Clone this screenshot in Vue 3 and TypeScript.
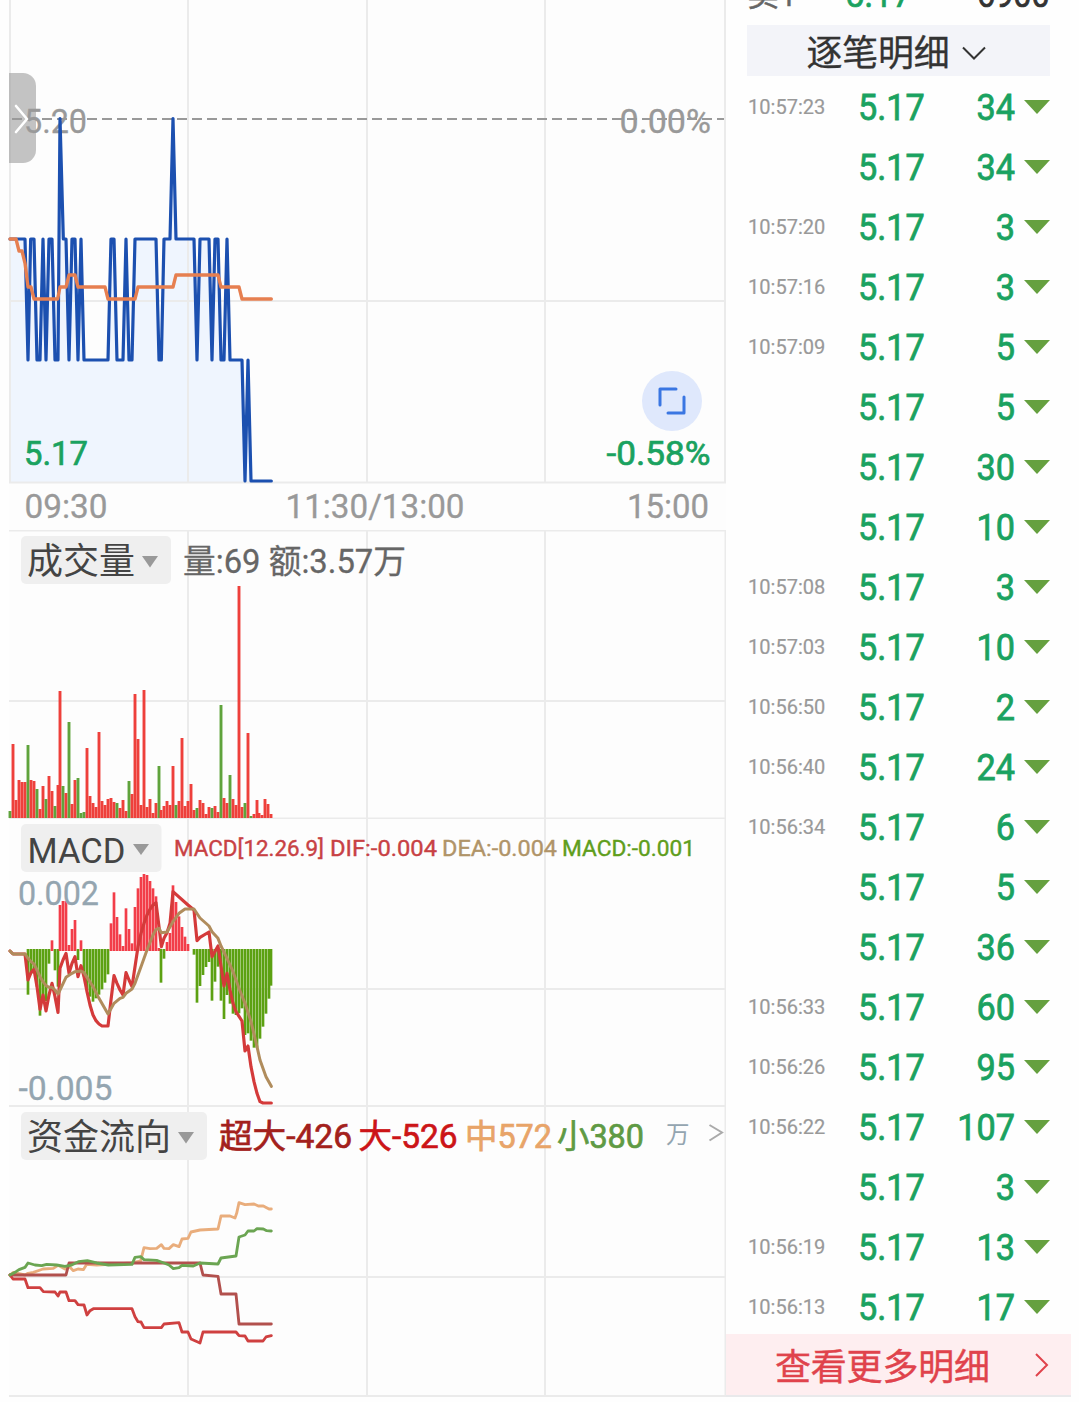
<script setup lang="ts">
interface Label {
  text: string
  x: number
  y: number
  width: number
  size: number
  color: string
  bold?: number
}

interface Tick {
  time: string
  price: string
  qty: number
}

type Point = [number, number]

// Chart data is kept on a grid three times finer than the screen pixel.
const STEP = 8.91
const START = 30
const barX = (i: number): number => Math.round((START + i * STEP) / 3)

const poly = (s: string): string => s.trim().split(/\s+/).join(' ')

// Price runs: "x @ level" pairs, level in cents above 5.00
const priceRuns =
  '30@19 75@19 84@18 92@19 102@19 111@18 120@18 129@19 138@18 147@19 156@19 165@18 174@18 180@20 190@19 198@19 207@18 216@19 225@19 234@18 243@19 252@18 324@18 333@19 342@19 351@18 369@18 378@19 387@18 396@18 405@19 468@19 477@18 484@18 492@19 510@19 519@20 528@19 582@19 591@18 600@19 627@19 636@18 645@19 654@19 663@18 672@18 681@19 690@18 726@18 735@17 744@18 753@17 814@17'
const levelY: Record<string, number> = { '20': 118.5, '19': 239, '18': 360, '17': 481 }
const pricePoints: Point[] = priceRuns.split(' ').map((p) => {
  const [x, l] = p.split('@')
  return [Number(x) / 3, levelY[l]]
})
const priceLine = pricePoints.map((p) => p.join(',')).join(' ')
const priceArea = `10,482 ${priceLine} 271,482`

const avgLine = poly(
  '30,537 48,537 57,573 66,573 75,610 84,681 93,681 102,717 173,717 180,681 198,681 207,645 225,645 234,681 315,681 324,717 405,717 414,681 519,681 528,645 654,645 663,681 717,681 726,717 814,717',
)

const volumeData =
  '858g 657 825 765 771 771 660g 765 768 792g 852 783 822g 753 798 843g 780 498 783g 804 591g 837 765 759g 864g 861g 669 813 834 846 621 828 840 822 819 831 834g 849 825 858 768g 807 507 642 840 495 846 822 864 834 723g 855 843 828 840 723 840g 828 639 843 828 777 855 849g 825 834 867 846 849g 843 861 540g 819 834 750g 822 840 183 846 834g 624 873g 867 825 864 870 822 837 867'
const volumeBars = volumeData.split(' ').map((v, i) => ({
  x: barX(i),
  top: 525 + parseInt(v, 10) / 3,
  color: v.endsWith('g') ? '#5fa33c' : '#ee403b',
}))

const macdData =
  '84:524 93:460 102:460 111:500 120:587 129:545 138:543 147:431 156:361 165:451 174:500 180:255 189:243 198:243 207:375 216:327 225:300 234:420 243:361 252:470 261:510 270:530 279:545 288:535 297:524 306:508 315:488 324:463 333:310 342:217 351:291 360:343 369:378 378:265 387:327 396:370 405:261 414:205 423:171 432:162 441:165 450:183 459:205 468:229 477:384 484:488 492:416 501:366 510:339 519:196 528:246 537:289 546:321 555:350 564:372 582:404 591:548 600:498 609:465 618:441 627:426 636:542 645:485 654:440 663:542 672:597 681:525 690:551 699:581 708:585 717:580 726:565 735:645 744:640 753:662 762:683 771:683 780:656 789:620 798:581 807:536 814:497'
const macdBars = macdData.split(' ').map((d) => {
  const [x, v] = d.split(':').map(Number)
  const up = v < 390
  return { x: Math.round(x / 3), from: 820 + (up ? 393 : 387) / 3, to: 820 + v / 3, color: up ? '#f23d49' : '#5ca112' }
})

const difLine = poly(
  '30,393 39,402 75,402 84,480 93,458 102,448 111,500 120,568 129,525 138,573 147,525 156,490 165,530 174,577 180,445 189,420 198,400 207,460 216,430 225,410 234,470 243,437 252,470 261,515 270,555 279,585 288,602 297,612 306,618 324,618 333,540 342,467 351,490 360,510 369,525 378,458 387,480 396,500 405,440 414,380 423,340 432,310 441,285 450,268 459,255 468,248 477,320 484,380 492,355 501,338 510,310 519,215 564,255 582,270 591,362 600,352 627,336 636,410 654,378 672,498 681,460 690,510 699,550 708,575 726,603 735,693 744,678 753,740 762,785 771,820 780,845 789,849 814,849',
)
const deaLine = poly(
  '30,393 39,402 75,402 84,415 93,425 102,432 111,450 120,470 129,485 138,497 147,502 156,502 165,510 174,522 180,510 198,472 216,460 225,455 243,453 252,458 261,472 279,500 297,535 324,582 342,550 360,535 369,532 378,520 396,507 405,490 423,440 441,390 459,345 468,328 477,325 484,338 501,336 519,305 537,280 555,267 582,267 600,294 627,318 636,335 654,355 663,378 681,415 699,455 717,505 735,550 753,605 771,680 780,720 798,770 814,799',
)

const flowLines = [
  {
    color: '#e9ad7c',
    points: poly(
      '30,510 40,502 75,510 84,505 100,502 129,492 160,490 174,481 195,492 207,484 220,497 234,492 250,494 260,478 290,480 396,474 422,468 432,428 450,431 470,430 484,419 492,430 507,431 520,419 537,425 546,402 564,400 573,381 600,375 654,372 663,333 690,333 705,339 710,325 717,293 735,299 762,297 775,303 790,303 807,312 814,312',
    ),
  },
  {
    color: '#b2504d',
    points: poly(
      '30,510 198,510 207,474 600,474 609,510 654,514 663,567 708,567 717,657 814,657',
    ),
  },
  {
    color: '#cf4040',
    points: poly(
      '30,510 39,522 75,522 84,548 120,548 130,560 165,561 174,573 180,561 198,561 207,587 225,587 234,599 252,600 261,630 270,617 280,611 396,611 405,635 414,650 423,651 432,668 484,668 492,657 537,653 546,681 564,681 573,702 600,714 609,681 708,681 717,692 735,693 744,708 789,708 798,696 814,692',
    ),
  },
  {
    color: '#6ba552',
    points: poly(
      '30,510 48,500 57,494 75,487 84,474 105,480 125,482 140,478 170,480 195,484 215,480 235,470 262,467 290,474 325,480 396,478 405,457 422,455 432,464 470,466 492,474 507,480 520,491 537,488 546,481 580,483 600,474 654,477 663,459 708,453 717,396 735,390 744,378 762,378 771,371 790,372 800,377 814,378',
    ),
  },
]

const gridX = [188, 367, 545]

const priceLabels: Label[] = [
  { text: '5.20', x: 24, y: 133, width: 63, size: 33.5, color: '#999', bold: 0.3 },
  { text: '0.00%', x: 619.5, y: 133, width: 91.5, size: 33.5, color: '#999', bold: 0.3 },
  { text: '5.17', x: 24, y: 464.7, width: 64, size: 33.5, color: '#1aa260', bold: 0.7 },
  { text: '-0.58%', x: 606.5, y: 465, width: 104, size: 33.5, color: '#1aa260', bold: 0.7 },
  { text: '09:30', x: 24.5, y: 517.8, width: 83, size: 33.5, color: '#999', bold: 0.3 },
  { text: '11:30/13:00', x: 285.5, y: 517.8, width: 179, size: 33.5, color: '#999', bold: 0.3 },
  { text: '15:00', x: 627, y: 517.8, width: 82, size: 33.5, color: '#999', bold: 0.3 },
]
const volumeLabels: Label[] = [
  { text: '成交量', x: 27, y: 574, width: 108, size: 36, color: '#444' },
  { text: '量:69 额:3.57万', x: 183, y: 572.5, width: 223, size: 32.5, color: '#666', bold: 0.3 },
]
const macdLabels: Label[] = [
  { text: 'MACD', x: 27.5, y: 862.7, width: 98, size: 34.5, color: '#444' },
  { text: 'MACD[12.26.9]', x: 174, y: 856, width: 150, size: 22.5, color: '#c84144', bold: 0.4 },
  { text: 'DIF:-0.004', x: 330, y: 856, width: 107, size: 22.5, color: '#c84144', bold: 0.4 },
  { text: 'DEA:-0.004', x: 442, y: 856, width: 115, size: 22.5, color: '#b09468', bold: 0.4 },
  { text: 'MACD:-0.001', x: 562, y: 856, width: 133, size: 22.5, color: '#5f9e1c', bold: 0.4 },
  { text: '0.002', x: 18, y: 904.7, width: 81, size: 33.5, color: '#94a5b0', bold: 0.3 },
  { text: '-0.005', x: 18.5, y: 1100, width: 94, size: 33.5, color: '#94a5b0', bold: 0.3 },
]
const flowLabels: Label[] = [
  { text: '资金流向', x: 27, y: 1149.5, width: 144, size: 36, color: '#444' },
  { text: '超大-426', x: 219, y: 1147.7, width: 133, size: 33.5, color: '#a3211c', bold: 0.7 },
  { text: '大-526', x: 358.5, y: 1147.7, width: 99, size: 33.5, color: '#cc1417', bold: 0.7 },
  { text: '中572', x: 465, y: 1147.7, width: 87, size: 33.5, color: '#e8a468', bold: 0.7 },
  { text: '小380', x: 557, y: 1147.7, width: 87, size: 33.5, color: '#5f9a44', bold: 0.7 },
  { text: '万', x: 666, y: 1142.5, width: 23.5, size: 23.5, color: '#94a5b0' },
]

const ticks: Tick[] = (
  [
    ['10:57:23', 34], ['', 34], ['10:57:20', 3], ['10:57:16', 3], ['10:57:09', 5], ['', 5], ['', 30],
    ['', 10], ['10:57:08', 3], ['10:57:03', 10], ['10:56:50', 2], ['10:56:40', 24], ['10:56:34', 6],
    ['', 5], ['', 36], ['10:56:33', 60], ['10:56:26', 95], ['10:56:22', 107], ['', 3],
    ['10:56:19', 13], ['10:56:13', 17],
  ] as [string, number][]
).map(([time, qty]) => ({ time, qty, price: '5.17' }))
</script>

<template>
  <main class="screen">
    <section class="charts">
      <svg class="panel" viewBox="0 0 726 530" width="726" height="530">
        <rect x="9" y="0" width="717" height="530" fill="#fdfdfd" />
        <polygon :points="priceArea" fill="#eff5fe" />
        <g class="grid">
          <path d="M10 0V483M725 0V483M9 301H726M9 482.5H726" />
          <path v-for="x in gridX" :key="x" :d="`M${x} 0V482`" />
        </g>
        <path d="M9 119H724" stroke="#999" stroke-width="2" stroke-dasharray="10 5" stroke-dashoffset="-3" />
        <text
          v-for="l in priceLabels" :key="l.text" :x="l.x" :y="l.y" :textLength="l.width"
          lengthAdjust="spacingAndGlyphs" :font-size="l.size" :fill="l.color" :stroke="l.color" :stroke-width="l.bold ?? 0"
        >{{ l.text }}</text>
        <polyline :points="priceLine" class="line" stroke="#1c50b0" stroke-width="3.2" />
        <g transform="translate(0 60) scale(.33333)">
          <polyline :points="avgLine" class="line" stroke="#e67f50" stroke-width="10" />
        </g>
        <path d="M9 73H23A13 13 0 0 1 36 86V150A13 13 0 0 1 23 163H9Z" fill="#999" fill-opacity=".58" />
        <path d="M16 106L27 119L16 132" class="line" stroke="#fff" stroke-width="2.6" />
        <circle cx="672" cy="401" r="30" fill="#dfe8fc" />
        <path d="M676 389H660V405M684 397V413H668" class="line" stroke="#3a76e2" stroke-width="3" />
      </svg>

      <svg class="panel" viewBox="0 530 726 288" width="726" height="288">
        <rect x="9" y="530" width="717" height="288" fill="#fdfdfd" />
        <g class="grid">
          <path d="M9 530.500H726M9 701H726M9 818.5H726M725.5 530V818" />
          <path v-for="x in gridX" :key="x" :d="`M${x} 530V818`" />
        </g>
        <path
          v-for="b in volumeBars" :key="b.x" :d="`M${b.x} ${b.top}V819`" :stroke="b.color" stroke-width="2.9"
        />
        <rect x="21" y="536" width="150" height="48" rx="5" fill="#efefef" />
        <path d="M142 556H158L150 567.5Z" fill="#999" />
        <text
          v-for="l in volumeLabels" :key="l.text" :x="l.x" :y="l.y" :textLength="l.width"
          lengthAdjust="spacingAndGlyphs" :font-size="l.size" :fill="l.color" :stroke="l.color" :stroke-width="l.bold ?? 0"
        >{{ l.text }}</text>
      </svg>

      <svg class="panel" viewBox="0 818 726 288" width="726" height="288">
        <rect x="9" y="819" width="717" height="287" fill="#fdfdfd" />
        <g class="grid">
          <path d="M9 818H726M9 989H726M9 1106H726M725.5 818V1106" />
          <path v-for="x in gridX" :key="x" :d="`M${x} 818V1106`" />
        </g>
        <rect x="21" y="824" width="140.500" height="48" rx="5" fill="#efefef" />
        <path d="M133 844H149L141 855Z" fill="#999" />
        <path
          v-for="b in macdBars" :key="b.x" :d="`M${b.x} ${b.from}V${b.to}`" :stroke="b.color" stroke-width="2.7"
        />
        <text
          v-for="l in macdLabels" :key="l.text" :x="l.x" :y="l.y" :textLength="l.width"
          lengthAdjust="spacingAndGlyphs" :font-size="l.size" :fill="l.color" :stroke="l.color" :stroke-width="l.bold ?? 0"
        >{{ l.text }}</text>
        <g transform="translate(0 820) scale(.33333)">
          <polyline :points="difLine" class="line" stroke="#d43a3a" stroke-width="9.5" />
          <polyline :points="deaLine" class="line" stroke="#b08c5c" stroke-width="9" />
        </g>
      </svg>

      <svg class="panel" viewBox="0 1106 726 291" width="726" height="291">
        <rect x="9" y="1107" width="717" height="289" fill="#fdfdfd" />
        <g class="grid">
          <path d="M9 1106H726M9 1277H726M9 1396H726M725.5 1106V1396" />
          <path v-for="x in gridX" :key="x" :d="`M${x} 1106V1396`" />
        </g>
        <rect x="21" y="1112" width="186" height="48" rx="5" fill="#efefef" />
        <path d="M178 1132H194L186 1143.5Z" fill="#999" />
        <text
          v-for="l in flowLabels" :key="l.text" :x="l.x" :y="l.y" :textLength="l.width"
          lengthAdjust="spacingAndGlyphs" :font-size="l.size" :fill="l.color" :stroke="l.color" :stroke-width="l.bold ?? 0"
        >{{ l.text }}</text>
        <path d="M709.5 1125L722 1132.5L709.5 1140.5" fill="none" stroke="#aaa" stroke-width="2" />
        <g transform="translate(0 1105) scale(.33333)">
          <polyline v-for="f in flowLines" :key="f.color" :points="f.points" class="line" :stroke="f.color" stroke-width="8.5" />
        </g>
      </svg>
    </section>

    <aside class="details">
      <div class="quote">
        <span class="side">卖1</span>
        <span class="quote-price">5.17</span>
        <span class="quote-qty">6900</span>
      </div>
      <header class="title">
        <span>逐笔明细</span>
        <svg width="26" height="16" viewBox="0 0 26 16">
          <path d="M2 2.5L13 13.500L24 2.5" fill="none" stroke="#333" stroke-width="2" />
        </svg>
      </header>
      <ul class="ticks">
        <li v-for="(t, i) in ticks" :key="i" class="tick">
          <span class="time">{{ t.time }}</span>
          <span class="price">{{ t.price }}</span>
          <span class="qty">{{ t.qty }}</span>
          <svg class="down" width="26" height="14" viewBox="0 0 26 14">
            <path d="M0 0H26L13 14Z" fill="#65a03f" />
          </svg>
        </li>
      </ul>
      <footer class="more">
        <span>查看更多明细</span>
        <svg width="16" height="26" viewBox="0 0 16 26">
          <path d="M2 2L13 13L2 24" fill="none" stroke="#e0434c" stroke-width="2" />
        </svg>
      </footer>
    </aside>
  </main>
</template>

<style>
body {
  background: #fff;
}
</style>

<style scoped>
.screen {
  display: flex;
  width: 1079px;
  height: 1402px;
  overflow: hidden;
  background: #fefefe;
  font-family: Roboto, 'Noto Sans CJK SC', sans-serif;
}
.charts {
  width: 726px;
  flex: none;
}
.panel {
  display: block;
}
.grid {
  stroke: #ebebeb;
  stroke-width: 2;
}
.line {
  fill: none;
  stroke-linejoin: round;
  stroke-linecap: round;
}
.details {
  width: 345px;
  flex: none;
}
.quote {
  display: flex;
  height: 25px;
  padding: 0 21px;
  overflow: hidden;
  font-size: 36px;
  line-height: 42px;
  -webkit-text-stroke-width: 0.7px;
}
.quote > span {
  margin-top: -26px;
  height: 42px;
}
.side {
  width: 98px;
  color: #666;
  font-size: 32px;
  -webkit-text-stroke-width: 0.3px;
}
.quote-price {
  color: #1aa260;
  transform: scaleX(0.95);
  transform-origin: left;
}
.quote-qty {
  flex: 1;
  color: #333;
  text-align: right;
  transform: scaleX(0.9);
  transform-origin: right;
}
.title {
  display: flex;
  align-items: center;
  justify-content: center;
  gap: 11px;
  height: 51px;
  margin: 0 21px;
  padding-right: 4px;
  box-sizing: border-box;
  background: #f3f4f9;
  color: #333;
  font-size: 36px;
  line-height: 51px;
}
.title span {
  padding-top: 7px;
  letter-spacing: -0.2px;
  -webkit-text-stroke-width: 0.3px;
}
.title svg {
  margin-top: 4px;
}
.ticks {
  margin: 0;
  padding: 2px 0 0;
  list-style: none;
}
.tick {
  display: grid;
  grid-template-columns: 110px 72px 85px 9px 26px;
  align-items: center;
  height: 60px;
  padding-left: 22px;
  white-space: nowrap;
}
.time {
  margin-top: -2px;
  color: #999;
  font-size: 21px;
  transform: scaleX(0.955);
  transform-origin: left;
  -webkit-text-stroke-width: 0.2px;
}
.price,
.qty {
  color: #1aa260;
  font-size: 36px;
  transform: scaleX(0.95);
  transform-origin: left;
  -webkit-text-stroke-width: 0.8px;
}
.qty {
  text-align: right;
  transform-origin: right;
}
.down {
  grid-column: 5;
  margin-top: -3px;
}
.more {
  display: flex;
  align-items: center;
  justify-content: space-between;
  height: 61px;
  margin-top: -4px;
  padding: 0 21px 0 49px;
  border-bottom: 2px solid #e9e9eb;
  background: #feeef0;
  color: #e0434c;
  font-size: 36px;
  line-height: 61px;
  -webkit-text-stroke-width: 0.4px;
}
.more span {
  padding-top: 8px;
  letter-spacing: -0.2px;
}
</style>
